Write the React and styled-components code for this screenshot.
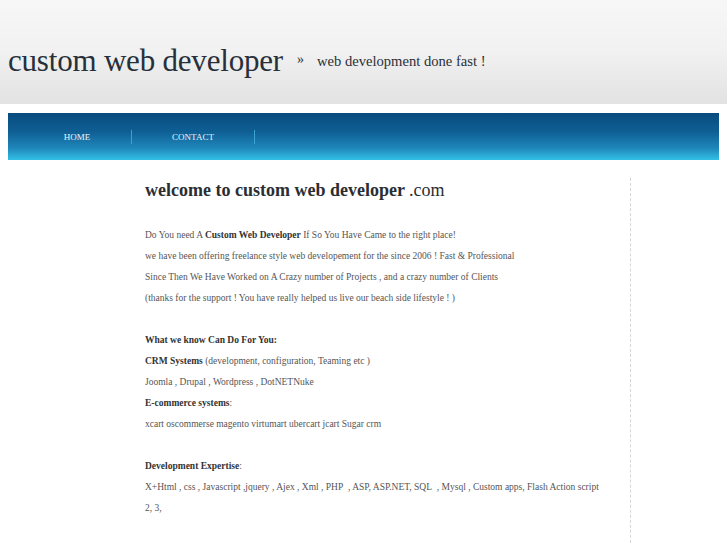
import React from "react";
import styled, { createGlobalStyle } from "styled-components";

const Global = createGlobalStyle`
  html, body { margin: 0; padding: 0; background: #fff; }
  body { font-family: "Liberation Serif", "Times New Roman", serif; }
`;

const Header = styled.header`
  height: 104px;
  display: flex;
  align-items: center;
  padding: 18px 0 0 8px;
  box-sizing: border-box;
  background: linear-gradient(to bottom, #f7f7f7 0%, #f1f1f1 50%, #e2e2e2 100%);
`;

const Logo = styled.h1`
  margin: 0;
  font-weight: normal;
  font-size: 31px;
  color: #27303a;
  letter-spacing: -0.2px;
`;

const Raquo = styled.span`
  font-size: 14px;
  color: #333;
  margin: 0 13px 0 14px;
  position: relative;
  top: -1px;
`;

const Tagline = styled.span`
  font-size: 14.6px;
  color: #2a2f36;
`;

const Nav = styled.nav`
  margin: 9px 8px 0 8px;
  padding-left: 15px;
  height: 47px;
  display: flex;
  align-items: center;
  background: linear-gradient(to bottom, #084b7e 0%, #0f5f94 40%, #1f87bb 75%, #33c1e6 100%);
`;

const NavItem = styled.a`
  width: ${(p) => p.w}px;
  text-align: center;
  color: #eaf4fb;
  font-size: 9px;
  text-transform: uppercase;
  text-decoration: none;
`;

const NavSep = styled.span`
  width: 1px;
  height: 14px;
  background: #3ba3d2;
`;

const Main = styled.div`
  display: flex;
  margin-top: 18px;
`;

const Content = styled.main`
  width: 462px;
  margin-left: 145px;
  margin-right: 15px;
  padding-top: 2px;
`;

const Sidebar = styled.aside`
  margin-left: 8px;
  border-left: 1px dashed #d6d6d6;
  height: 380px;
`;

const Title = styled.h2`
  margin: 0 0 24px;
  font-size: 18px;
  color: #2a2e33;
  span { font-weight: normal; }
`;

const Para = styled.p`
  margin: 0;
  font-size: 9.5px;
  line-height: 21px;
  color: #555;
  b { color: #333; }
`;

const Gap = styled.div`
  height: 21px;
`;

export default function App() {
  return (
    <>
      <Global />
      <Header>
        <Logo>custom web developer</Logo>
        <Raquo>»</Raquo>
        <Tagline>web development done fast !</Tagline>
      </Header>
      <Nav>
        <NavItem w={108}>Home</NavItem>
        <NavSep />
        <NavItem w={122}>Contact</NavItem>
        <NavSep />
      </Nav>
      <Main>
        <Content>
          <Title>
            welcome to custom web developer <span>.com</span>
          </Title>
          <Para>
            Do You need A <b>Custom Web Developer</b> If So You Have Came to the right place!
          </Para>
          <Para>we have been offering freelance style web developement for the since 2006 ! Fast &amp; Professional</Para>
          <Para>Since Then We Have Worked on A Crazy number of Projects , and a crazy number of Clients</Para>
          <Para>(thanks for the support ! You have really helped us live our beach side lifestyle ! )</Para>
          <Gap />
          <Para><b>What we know Can Do For You:</b></Para>
          <Para><b>CRM Systems</b> (development, configuration, Teaming etc )</Para>
          <Para>Joomla , Drupal , Wordpress , DotNETNuke</Para>
          <Para><b>E-commerce systems</b>:</Para>
          <Para>xcart oscommerse magento virtumart ubercart jcart Sugar crm</Para>
          <Gap />
          <Para><b>Development Expertise</b>:</Para>
          <Para>
            X+Html , css , Javascript ,jquery , Ajex , Xml , PHP&nbsp; , ASP, ASP.NET, SQL&nbsp; , Mysql , Custom apps, Flash Action script 2, 3,
          </Para>
          <Gap />
          <Para><b>Search Engine Marketing</b></Para>
        </Content>
        <Sidebar />
      </Main>
    </>
  );
}
